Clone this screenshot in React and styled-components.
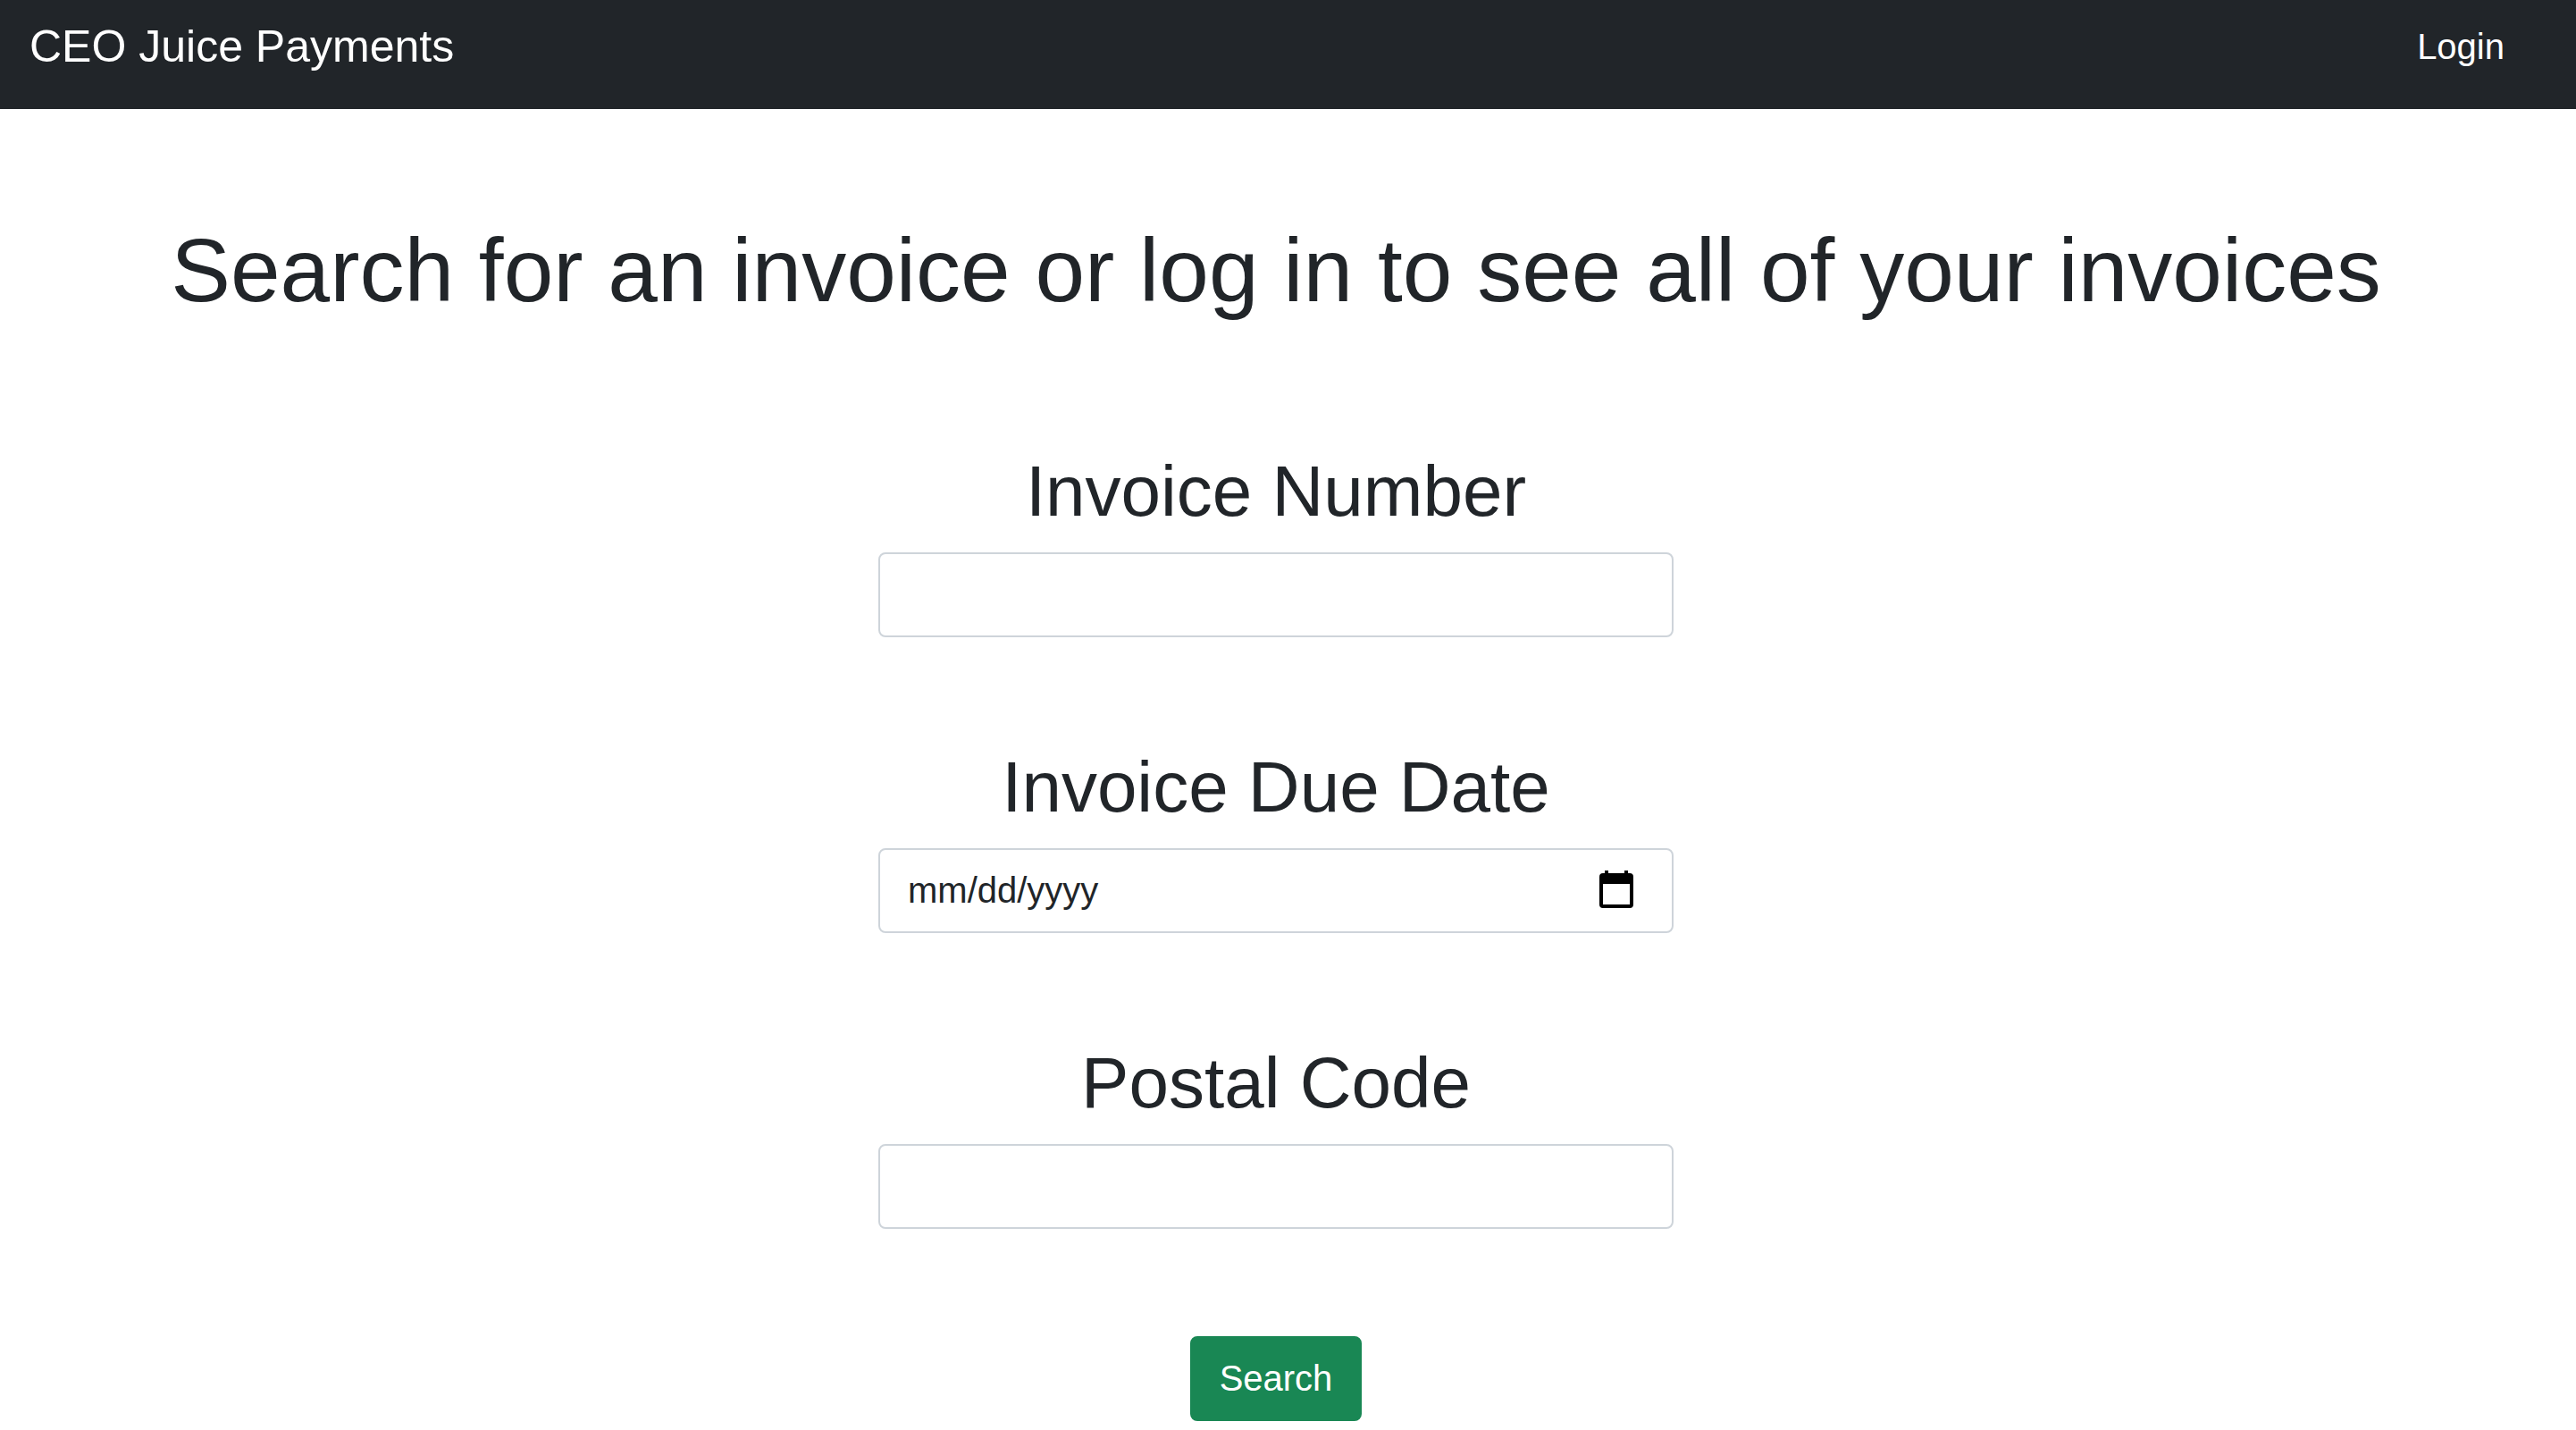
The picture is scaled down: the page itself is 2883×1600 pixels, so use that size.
import React from "react";
import styled, { createGlobalStyle } from "styled-components";

const Global = createGlobalStyle`
  html, body { margin: 0; padding: 0; background: #fff; }
  body { font-family: "Liberation Sans", Arial, sans-serif; color: #212529; }
`;
const Nav = styled.nav`
  height: 122px; background: #212529; display: flex; justify-content: space-between;
  box-sizing: border-box; padding: 22px 80px 0 33px; align-items: flex-start;
`;
const Brand = styled.a`color: #fff; font-size: 50px; line-height: 60px;`;
const Login = styled.a`color: #fff; font-size: 40px; line-height: 60px;`;
const Main = styled.main`display: flex; flex-direction: column; align-items: center; padding: 120px 27px 0 0;`;
const Title = styled.h1`font-size: 100px; font-weight: 400; line-height: 120px; margin: 0 0 140px;`;
const Field = styled.div`display: flex; flex-direction: column; align-items: center; margin-bottom: 120px; width: 890px;`;
const Label = styled.label`font-size: 80px; line-height: 96px; margin-bottom: 20px;`;
const Input = styled.div`
  box-sizing: border-box; width: 890px; height: 95px; border: 2px solid #ced4da; border-radius: 8px;
  background: #fff; display: flex; align-items: center; justify-content: space-between;
  padding: 0 43px 0 31px; font-size: 40px; color: #212529;
`;
const Button = styled.button`
  background: #198754; color: #fff; border: 2px solid #198754; border-radius: 8px;
  font: 40px "Liberation Sans", Arial, sans-serif; height: 95px; padding: 0 31px;
`;
const CalSvg = styled.svg`display: block; margin-bottom: 3px;`;
const Cal = () => (
  <CalSvg width="38" height="42" viewBox="0 0 38 42" aria-hidden="true">
    <path fillRule="evenodd" d="M6 0h4v3h18V0h4v3h2a4 4 0 0 1 4 4v31a4 4 0 0 1-4 4H4a4 4 0 0 1-4-4V7a4 4 0 0 1 4-4h2zM4 15v23h30V15z" fill="#000" />
  </CalSvg>
);
export default function App() {
  return (
    <>
      <Global />
      <Nav><Brand>CEO Juice Payments</Brand><Login>Login</Login></Nav>
      <Main>
        <Title>Search for an invoice or log in to see all of your invoices</Title>
        <Field><Label>Invoice Number</Label><Input /></Field>
        <Field><Label>Invoice Due Date</Label><Input>mm/dd/yyyy<Cal /></Input></Field>
        <Field><Label>Postal Code</Label><Input /></Field>
        <Button>Search</Button>
      </Main>
    </>
  );
}
